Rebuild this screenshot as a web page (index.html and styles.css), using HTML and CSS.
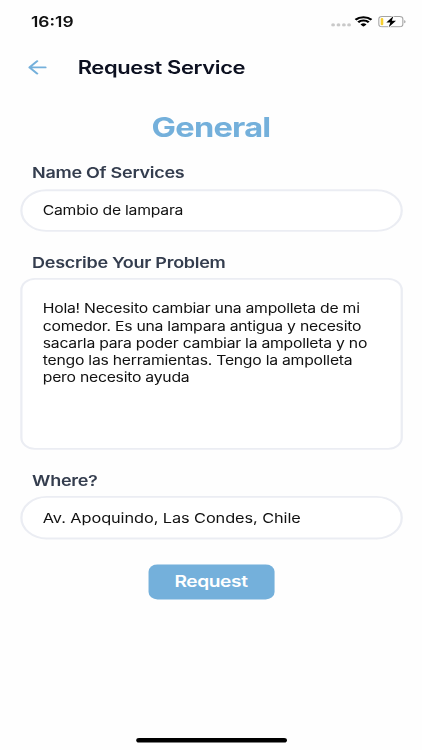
FILE: index.html
```html
<!DOCTYPE html>
<html lang="en">
  <head>
    <meta charset="UTF-8" />
    <title>Request Service</title>
    <link rel="stylesheet" href="styles.css">
  </head>
  <body>
    <div class="frame">
    <div class="screen">
      <div class="statusbar">
        <span class="time">16:19</span>
        <div class="indicators">
          <svg class="signal" width="18" height="4" viewBox="0 0 18 4" fill="#c9c9c9">
            <circle cx="2" cy="2" r="1.7" />
            <circle cx="6.8" cy="2" r="1.7" />
            <circle cx="11.6" cy="2" r="1.7" />
            <circle cx="16.2" cy="2" r="1.7" />
          </svg>
          <svg class="wifi" width="16" height="12" viewBox="0 0 15 12" preserveAspectRatio="none" fill="none" stroke="#000" stroke-width="2.2">
            <path d="M0.8 4.4 A9.6 9.6 0 0 1 14.2 4.4" />
            <path d="M3.1 7.1 A6.3 6.3 0 0 1 11.9 7.1" />
            <path d="M7.5 11.9 L5 9.4 A3.4 3.4 0 0 1 10 9.4 Z" fill="#000" stroke="none" />
          </svg>
          <svg class="battery" width="25" height="13" viewBox="0 0 25 13">
            <rect x="0.6" y="0.8" width="21.4" height="11.2" rx="3" fill="none" stroke="#a3a3a3" />
            <rect x="2.3" y="2.5" width="2.3" height="7.8" rx="1" fill="#f7cf2e" />
            <path d="M23.2 4.6 C24.8 5.2 24.8 7.6 23.2 8.2 Z" fill="#a3a3a3" />
            <path d="M13.6 0.3 L7.3 7.3 H10.9 L9.4 12.6 L15.9 5.5 H12.2 Z" fill="#000" stroke="#fff" stroke-width="1.6" paint-order="stroke" />
          </svg>
        </div>
      </div>

      <div class="header">
        <svg class="back" width="17" height="16" viewBox="0 0 17 16" fill="none" stroke="#74b0db" stroke-width="2" stroke-linecap="round" stroke-linejoin="round">
          <path d="M15.4 8 H1.2 M8 1.2 L1.2 8 L8 14.8" />
        </svg>
        <span class="title">Request Service</span>
      </div>

      <h1 class="section">General</h1>

      <form class="form">
        <label class="label" for="name">Name Of Services</label>
        <input class="input" type="text" id="name" value="Cambio de lampara" />

        <label class="label" for="problem">Describe Your Problem</label>
        <textarea class="input problem" id="problem" spellcheck="false">Hola! Necesito cambiar una ampolleta de mi comedor. Es una lampara antigua y necesito sacarla para poder cambiar la ampolleta y no tengo las herramientas. Tengo la ampolleta pero necesito ayuda</textarea>

        <label class="label" for="where">Where?</label>
        <input class="input where" type="text" id="where" value="Av. Apoquindo, Las Condes, Chile" />

        <button class="request" type="button">Request</button>
      </form>

      <div class="home"></div>
    </div>
    </div>
  </body>
</html>
```
FILE: styles.css
```css
* {
  box-sizing: border-box;
}
body {
  margin: 0;
  background-color: #fefefe;
}
.frame {
  width: 422px;
  height: 750px;
  overflow: hidden;
}
/* 375x812 phone screen fitted to the window */
.screen {
  width: 375px;
  height: 812px;
  display: flex;
  flex-direction: column;
  transform: scale(1.1253, 0.9236);
  transform-origin: 0 0;
  font-family: Inter, "Liberation Sans", sans-serif;
  color: #111;
}
.statusbar {
  height: 46px;
  margin-bottom: 1px;
  padding: 0 14px 0 27.5px;
  display: flex;
  align-items: center;
  justify-content: space-between;
}
.time {
  font-size: 15.5px;
  font-weight: 600;
}
.indicators {
  display: flex;
  align-items: center;
  gap: 5px;
}
.signal {
  margin: 7px -1.5px 0 0;
}
.header {
  height: 51px;
  padding-left: 24.5px;
  display: flex;
  align-items: center;
  gap: 27.5px;
}
.title {
  font-size: 19.5px;
  font-weight: 600;
  letter-spacing: -0.33px;
  color: #0c1020;
}
.section {
  margin: 0;
  height: 79px;
  line-height: 79px;
  text-align: center;
  font-size: 29px;
  font-weight: 700;
  letter-spacing: -0.7px;
  color: #74b0db;
}
.form {
  display: flex;
  flex-direction: column;
  padding: 0 17.5px;
}
.label {
  height: 20.5px;
  line-height: 21px;
  margin: 0 0 7px 11px;
  font-size: 16px;
  font-weight: 600;
  letter-spacing: -0.25px;
  color: #343d4e;
}
.input {
  height: 46.5px;
  margin: 0 0 22.5px;
  padding: 0 18.5px;
  border: 2px solid #ebedf3;
  border-radius: 24px;
  background-color: #fff;
  font-family: inherit;
  font-size: 14px;
  letter-spacing: -0.22px;
  color: #111;
  outline: none;
}
.problem {
  height: 186px;
  padding-top: 22px;
  border-radius: 13px;
  line-height: 18.75px;
  resize: none;
  overflow: hidden;
}
.where {
  font-size: 14.5px;
  letter-spacing: -0.07px;
}
.request {
  align-self: center;
  width: 112px;
  height: 38px;
  margin-top: 5px;
  padding: 0;
  border: none;
  border-radius: 8px;
  background-color: #74b0db;
  color: #fff;
  font-family: inherit;
  font-size: 17px;
  font-weight: 600;
  letter-spacing: -0.35px;
}
.home {
  width: 134px;
  height: 5px;
  margin: auto auto 8px;
  border-radius: 3px;
  background-color: #000;
}
```
